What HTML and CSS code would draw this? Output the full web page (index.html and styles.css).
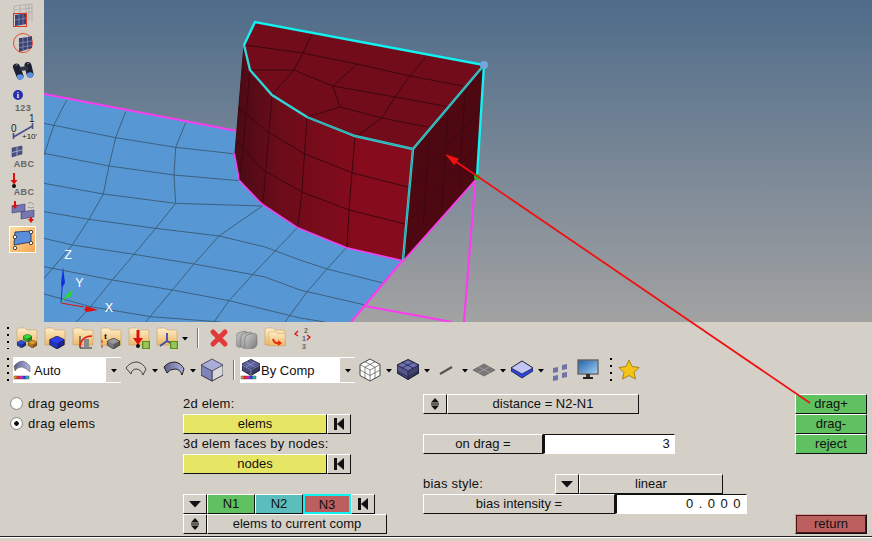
FILE: index.html
```html
<!DOCTYPE html>
<html lang="en">
<head>
<meta charset="utf-8">
<title>Solid edit drag</title>
<link rel="stylesheet" href="styles.css">
</head>
<body>
<svg class="defs" width="0" height="0" aria-hidden="true">
  <defs>
    <linearGradient id="sky" x1="0" y1="0" x2="0" y2="1"><stop offset="0" stop-color="#4f6c8a"/><stop offset="1" stop-color="#a2a2a2"/></linearGradient>
    <linearGradient id="front" x1="235" y1="0" x2="360" y2="0" gradientUnits="userSpaceOnUse"><stop offset="0" stop-color="#4a0a14"/><stop offset=".35" stop-color="#6b0c19"/><stop offset="1" stop-color="#860b1c"/></linearGradient>
    <linearGradient id="fold" x1="0" y1="0" x2="0" y2="1"><stop offset="0" stop-color="#fdeec9"/><stop offset="1" stop-color="#eeb765"/></linearGradient>
    <linearGradient id="rainbow" x1="0" y1="0" x2="1" y2="0"><stop offset="0" stop-color="#e8c020"/><stop offset=".25" stop-color="#e02020"/><stop offset=".5" stop-color="#d020d0"/><stop offset=".7" stop-color="#2030e0"/><stop offset=".85" stop-color="#20c0d0"/><stop offset="1" stop-color="#30c030"/></linearGradient>
    <linearGradient id="orange" x1="0" y1="0" x2="1" y2="1"><stop offset="0" stop-color="#fde0a8"/><stop offset="1" stop-color="#f5a650"/></linearGradient>
    <linearGradient id="screen" x1="0" y1="0" x2="1" y2="1"><stop offset="0" stop-color="#1c5fa8"/><stop offset="1" stop-color="#a5d2f2"/></linearGradient>
    <linearGradient id="shape" x1="0" y1="0" x2="1" y2="0"><stop offset="0" stop-color="#5a5e8a"/><stop offset="1" stop-color="#b0b4dc"/></linearGradient>
    <linearGradient id="shell" x1="0" y1="0" x2="1" y2="1"><stop offset="0" stop-color="#c8c8c8"/><stop offset="1" stop-color="#7c7c7c"/></linearGradient>
    <symbol id="folder" viewBox="0 0 22 22"><path d="M1 3q0-2 2-2h6l2 2h8q2 0 2 2v13H1z" fill="url(#fold)" stroke="#c9a060" stroke-width=".6"/></symbol>
    <symbol id="cube" viewBox="0 0 10 9"><polygon points="5,0 10,2.5 10,6 5,9 0,6 0,2.5" fill="currentColor" stroke="#223" stroke-width=".5"/><polygon points="0,2.5 5,5 5,9 0,6" fill="#000" opacity=".22"/><polygon points="10,2.5 5,5 5,9 10,6" fill="#000" opacity=".4"/></symbol>
    <symbol id="list" viewBox="0 0 8 8"><rect width="8" height="8" fill="#6aa820" stroke="#3c6a10" stroke-width=".6"/><path d="M1.5 2h5M1.5 4h5M1.5 6h5" stroke="#dfeebb" stroke-width=".8"/></symbol>
    <symbol id="caret" viewBox="0 0 8 5"><polygon points="1,1 7,1 4,4.5" fill="#000"/></symbol>
    <symbol id="updown" viewBox="0 0 10 14"><polygon points="5,1 9,5.5 1,5.5" fill="#111"/><rect x="1" y="6.4" width="8" height="1.2" fill="#111"/><polygon points="5,13 9,8.5 1,8.5" fill="#111"/></symbol>
    <symbol id="first" viewBox="0 0 14 14"><rect x="2" y="1" width="3" height="12" fill="#111"/><polygon points="12,1 12,13 5,7" fill="#111"/></symbol>
    <symbol id="bigcaret" viewBox="0 0 14 8"><polygon points="1,1 13,1 7,7.5" fill="#111"/></symbol>
  </defs>
</svg>

<main class="stage">
  <nav class="leftbar">
    <svg class="tool t1" viewBox="0 0 44 28"><path d="M14 6l18-2v18M14 6v10M20 5.500v11M26 5v12M14 10l18-2M14 14l18-2M29 4.500v16" fill="none" stroke="#a5a5a5" stroke-width=".7"/><path d="M15 15l12-2v11l-12 2z" fill="#3d4370"/><path d="M19 14.500v11M23 14v11M15 20l12-2" stroke="#8a90b8" stroke-width=".7"/><rect x="13.500" y="13.500" width="13" height="13" fill="none" stroke="#e6341e" stroke-width="1"/></svg>
    <svg class="tool t2" viewBox="0 28 44 29"><circle cx="23" cy="43" r="9.500" fill="none" stroke="#e8492e" stroke-width="1"/><path d="M19 38q4 0 13-2v12q-7 2-13 4z" fill="#3d4370"/><path d="M23 37.500v13M27.500 37v12M19 43l13-2M19 47.500l13-2" stroke="#8a90b8" stroke-width=".7"/></svg>
    <svg class="tool t3" viewBox="0 57 44 26"><path d="M16.500 67L20 76M28 65.500L30 74" stroke="#1c1f30" stroke-width="7" stroke-linecap="round" fill="none"/><path d="M20 69l8-1" stroke="#30344a" stroke-width="4"/><path d="M15.500 65.500l2-1M27 64l2-.5" stroke="#8a8fa8" stroke-width="1"/><ellipse cx="20" cy="77" rx="3.200" ry="2.700" fill="#5a92e8"/><ellipse cx="30" cy="75" rx="3.200" ry="2.700" fill="#5a92e8"/></svg>
    <svg class="tool t4" viewBox="0 83 44 30"><circle cx="18" cy="95" r="5" fill="#2430b0"/><text x="18" y="98" class="ii">i</text><text x="23" y="111" class="lab">123</text></svg>
    <svg class="tool t5" viewBox="0 113 44 30"><path d="M13.500 133v6M32.500 123v6M13.500 137l19-11" fill="none" stroke="#4b4f86" stroke-width="1.600"/><text x="14" y="132" class="sm">0</text><text x="32" y="122" class="sm">1</text><text x="22" y="139" class="sm2">+10'</text></svg>
    <svg class="tool t6" viewBox="0 143 44 27"><path d="M12 148l10-2v8l-10 3z" fill="#4d5286" stroke="#2c2f58" stroke-width=".5"/><path d="M17 147v9M12 152.500l10-2.500" stroke="#c2c5e0" stroke-width=".7"/><text x="24" y="167" class="lab">ABC</text></svg>
    <svg class="tool t7" viewBox="0 170 44 28"><path d="M14 173v9" stroke="#e01010" stroke-width="2"/><polygon points="10.500,180 17.500,180 14,184.500" fill="#e01010"/><circle cx="14" cy="186" r="2" fill="#111"/><text x="24" y="195" class="lab">ABC</text></svg>
    <svg class="tool t8" viewBox="0 198 44 28"><path d="M12 206l13-2v7l-13 2z" fill="#7376b0" stroke="#2c2f58" stroke-width=".5"/><path d="M21 212l13-2v7l-13 2z" fill="#7376b0" stroke="#2c2f58" stroke-width=".5"/><path d="M15 201v5M31 217v3" stroke="#e01010" stroke-width="2"/><polygon points="12,205 18,205 15,209" fill="#e01010"/><polygon points="28,219 34,219 31,223" fill="#e01010"/><path d="M28 203q4-2 6 2M28 207q3 2 6 0" fill="none" stroke="#999" stroke-width="1"/></svg>
    <svg class="tool t9" viewBox="0 226 44 28"><rect x="9.500" y="226.500" width="26" height="26" fill="url(#orange)" stroke="#fff"/><path d="M15 232l16-1 0 11-17 3z" fill="#5b8ed8" stroke="#1f2b50" stroke-width=".8"/><g fill="#fff" stroke="#222" stroke-width=".8"><circle cx="15" cy="237" r="1.700"/><circle cx="31" cy="232" r="1.700"/><circle cx="31" cy="243" r="1.700"/><circle cx="15" cy="248" r="1.700"/></g></svg>
  </nav>

  <svg class="viewport" viewBox="44 0 828 322">
    <rect x="44" y="0" width="828" height="322" fill="url(#sky)"/>
    <polygon points="44,94 237,131 235,153 403,260 351,322 44,322" fill="#5798d4"/>
    <g transform="translate(44 90) scale(.33333)" fill="none" stroke="#3e5f7e" stroke-width="3">
      <path d="M0 100L215 143L395 172L575 192"/>
      <path d="M0 190L195 228L390 255L585 272"/>
      <path d="M0 280L178 312L395 340L655 348"/>
      <path d="M0 365L135 388L335 415L525 438L660 470L768 510L849 537L1017 579"/>
      <path d="M0 445L85 465L270 493L450 522L660 560L768 600L963 645"/>
      <path d="M0 530L205 570L385 600L555 632L768 684L843 696"/>
      <path d="M0 612L140 650L320 680L530 696"/>
      <path d="M68 30L30 105L0 195"/>
      <path d="M245 65L215 143L195 228L178 312L135 388L85 465L0 565"/>
      <path d="M425 98L395 172L390 255L395 340L335 415L270 493L205 570L140 650L97 696"/>
      <path d="M655 348L525 438L450 522L385 600L305 696"/>
      <path d="M762 411L639 540L555 632L510 696"/>
      <path d="M909 471L849 537L789 606L723 696"/>
    </g>
    <g fill="none" stroke="#fb3cf0">
      <path d="M44 94L237 131" stroke-width="1.800"/>
      <path d="M403 260L351 322" stroke-width="2.200"/>
      <path d="M365 306L452 322" stroke-width="2.200"/>
      <path d="M475 183L464 322" stroke-width="2.200"/>
      <path d="M403 261L477 178" stroke-width="2.200"/>
      <path d="M235 153L240 180L262 203L298 227L347 247L403 260" stroke-width="3"/>
    </g>
    <polygon points="255,22 484,65 413,149 355,136 307,117 272,95 250,70 244,45" fill="#730c1a"/>
    <polygon points="244,45 250,70 272,95 307,117 355,136 413,149 403,260 347,247 298,227 262,203 240,180 235,153" fill="url(#front)"/>
    <polygon points="484,65 413,149 403,260 477,177" fill="#4e0812"/>
    <g fill="none" stroke="#3d0710" stroke-width="1">
      <path d="M312 34L303 53L294 70L272 95"/>
      <path d="M245 45L303 53L357 64L410 76L463 86"/>
      <path d="M250 70L294 70L333 86L395 97L450 107"/>
      <path d="M357 64L333 86L340 107L307 117"/>
      <path d="M426 57L410 76L395 97L382 118L357 136"/>
      <path d="M340 107L382 118L428 127"/>
      <path d="M244 45L235 153"/>
      <path d="M250 70L240 180"/>
      <path d="M272 95L263 203"/>
      <path d="M307 117L302 190L298 227"/>
      <path d="M355 136L352 173L349 210L347 247"/>
      <path d="M238 107L268 132L305 154L353 173L408 187"/>
      <path d="M236 140L263 170L302 192L349 210L405 224"/>
      <path d="M429 138L423 227M448 113L442 207M465 92L459 187"/>
      <path d="M410 187L480 110M406 224L477 147"/>
    </g>
    <path d="M244 45L250 70L272 95L307 117L355 136L413 149L403 260M484 65L413 149" fill="none" stroke="#33d6d6" stroke-width="2.400"/>
    <path d="M307 117L355 136L413 149L403 260M484 65L413 149" fill="none" stroke="#2b7f8c" stroke-width=".6"/>
    <path d="M244 45L255 22L484 65L477 177" fill="none" stroke="#12f2f2" stroke-width="2.400"/>
    <circle cx="484" cy="65" r="4" fill="#6ea8dc"/>
    <circle cx="477" cy="177" r="3" fill="#1fb81f"/>
    <path d="M61 303L63 275" stroke="#1030e0" stroke-width="1"/>
    <path d="M63 267L65 283L62 288L61 283z" fill="#1030e0"/>
    <path d="M61 303L68 294" stroke="#20e020" stroke-width="1"/>
    <path d="M73 290L70 297L66 298L67 294z" fill="#20e020"/>
    <path d="M61 303L84 307" stroke="#e01010" stroke-width="1"/>
    <path d="M98 310L87 312L84 310L86 306z" fill="#e01010"/>
    <text x="68" y="259" class="axis">Z</text>
    <text x="79.500" y="287" class="axis">Y</text>
    <text x="109" y="312" class="axis">X</text>
  </svg>
</main>

<section class="bar bar-one">
  <span class="grip"></span>
  <svg class="ic"><use href="#folder"/><use href="#cube" x="7" y="7" width="9" height="8" color="#35e035"/><use href="#cube" x="1" y="13" width="9" height="8" color="#2c4ee0"/><use href="#cube" x="12" y="13" width="9" height="8" color="#e09a28"/></svg>
  <svg class="ic"><use href="#folder"/><use href="#cube" x="4" y="9" width="18" height="13" color="#2c40f0"/></svg>
  <svg class="ic"><use href="#folder"/><path d="M8 9v12h12" fill="none" stroke="#222"/><path d="M8 20q1-11 12-11" fill="none" stroke="#e02020" stroke-width="1.600"/><rect x="12" y="12" width="5" height="9" fill="#888"/></svg>
  <svg class="ic"><use href="#folder"/><text x="4" y="12" class="t-t">t</text><path d="M2 13v3M2 18v3" stroke="#d02020"/><use href="#cube" x="5" y="11" width="17" height="11" color="#9a9a9a"/></svg>
  <svg class="ic"><use href="#folder"/><path d="M10 3v11" stroke="#e01010" stroke-width="3"/><polygon points="5,11 15,11 10,18" fill="#e01010"/><circle cx="10" cy="19" r="2" fill="#111"/><use href="#list" x="14" y="14" width="8" height="8"/></svg>
  <svg class="ic"><use href="#folder"/><path d="M11 14v-8M11 14l-7 5M11 14l7 4" stroke="#3a4aa8" stroke-width="1.800" fill="none"/><use href="#list" x="14" y="14" width="8" height="8"/></svg>
  <svg class="caret caret-one"><use href="#caret"/></svg>
  <span class="sep sep-one"></span>
  <svg class="ic ic-x"><path d="M5 5l12 12M17 5L5 17" stroke="#e23a3a" stroke-width="5" stroke-linecap="round"/></svg>
  <svg class="ic"><rect x="0" y="3" width="12" height="15" rx="4" fill="url(#shell)" stroke="#777" stroke-width=".6" transform="skewY(-12) translate(0 3)"/><rect x="5" y="5" width="12" height="15" rx="4" fill="url(#shell)" stroke="#777" stroke-width=".6" transform="skewY(-12) translate(0 3)"/><rect x="9" y="7" width="12" height="15" rx="4" fill="url(#shell)" stroke="#777" stroke-width=".6" transform="skewY(-12) translate(0 3)"/></svg>
  <svg class="ic"><use href="#folder"/><use href="#folder" x="4" y="4" width="18" height="18"/><path d="M9 12q1 5 7 4" fill="none" stroke="#e03010" stroke-width="2"/><polygon points="14,13 18,16 14,19" fill="#e03010"/></svg>
  <svg class="ic ic-num"><text x="12" y="6" class="num">2</text><text x="10" y="14" class="num">1</text><text x="10" y="22" class="num">3</text><path d="M6 4l-3 3 3 2M15 8l3 2-3 3" stroke="#e01010" stroke-width="1.300" fill="none"/></svg>
</section>

<section class="bar bar-two">
  <span class="grip"></span>
  <div class="combo combo-auto">
    <svg class="combo-icon"><path d="M1 7q4-5 9-5q4 1 7 5l0 6q-4-4-8-5q-5 0-7 4z" fill="url(#shape)" stroke="#555" stroke-width=".5"/><rect x="1" y="17" width="15" height="3" fill="url(#rainbow)" stroke="#555" stroke-width=".5"/></svg>
    <span class="combo-text">Auto</span>
    <span class="combo-btn"><svg class="caret"><use href="#caret"/></svg></span>
  </div>
  <svg class="ic"><path d="M1 10q4-6 11-6q6 1 9 7l-3 6q-2-6-7-6q-4 0-5 5z" fill="none" stroke="#444"/></svg>
  <svg class="caret"><use href="#caret"/></svg>
  <svg class="ic"><path d="M1 9q4-5 11-5q6 1 9 7l-2 6q-2-6-7-6q-5 0-8 4z" fill="url(#shape)" stroke="#222"/></svg>
  <svg class="caret"><use href="#caret"/></svg>
  <svg class="ic"><polygon points="11,1 22,7 22,17 11,23 0,17 0,7" fill="#a9add8" stroke="#334" stroke-width=".8"/><polygon points="11,13 22,7 22,17 11,23" fill="#d8d8d8" stroke="#334" stroke-width=".8"/><polygon points="0,7 11,13 11,23 0,17" fill="#7f84b8" stroke="#334" stroke-width=".8"/></svg>
  <span class="sep sep-two"></span>
  <div class="combo combo-comp">
    <svg class="combo-icon"><use href="#cube" x="2" y="0" width="18" height="17" color="#5b5f9c"/><path d="M2 6l9 5 9-5M11 11v6M6 3l9 5M15 3l-9 5" stroke="#a0a4d0" stroke-width=".6" fill="none"/><rect x="1" y="17" width="15" height="3" fill="url(#rainbow)" stroke="#555" stroke-width=".5"/></svg>
    <span class="combo-text">By Comp</span>
    <span class="combo-btn"><svg class="caret"><use href="#caret"/></svg></span>
  </div>
  <svg class="ic"><polygon points="11,1 21,6.500 21,17.500 11,23 1,17.500 1,6.500" fill="#fff" stroke="#444"/><path d="M1 6.500l10 5.500 10-5.500M11 12v11M6 3.700l10 5.500M16 3.700L6 9.200M1 12l10 5.500 10-5.500M6 9.200v11M16 9.200v11" stroke="#555" stroke-width=".7" fill="none"/></svg>
  <svg class="caret"><use href="#caret"/></svg>
  <svg class="ic"><use href="#cube" x="0" y="1" width="22" height="21" color="#6d70ac"/><path d="M0 7l11 6 11-6M11 13v9M5 4l11 6M17 4L5 10M0 13l11 6 11-6" stroke="#1e2050" stroke-width=".8" fill="none"/></svg>
  <svg class="caret"><use href="#caret"/></svg>
  <svg class="ic"><path d="M5 16L17 9" stroke="#555" stroke-width="2.200"/></svg>
  <svg class="caret"><use href="#caret"/></svg>
  <svg class="ic"><polygon points="11,6 22,12 11,18 0,12" fill="#777" stroke="#555" stroke-width=".6"/><path d="M6 9l11 6M16 9L5 15" stroke="#aaa" stroke-width=".7"/></svg>
  <svg class="caret"><use href="#caret"/></svg>
  <svg class="ic"><polygon points="11,3 22,10 22,13 11,20 0,13 0,10" fill="#2c44e8" stroke="#111" stroke-width=".7"/><polygon points="11,3 22,10 11,16 0,10" fill="#c3c6f4" stroke="#111" stroke-width=".7"/></svg>
  <svg class="caret"><use href="#caret"/></svg>
  <svg class="ic"><g fill="#6f73a8"><path d="M4 10l5-1v5l-5 1zM13 7l5-1v5l-5 1zM4 18l5-1v5l-5 1zM13 15l5-1v5l-5 1z"/></g></svg>
  <svg class="ic ic-mon"><rect x="1" y="2" width="20" height="14" fill="url(#screen)" stroke="#666" stroke-width="1.400"/><rect x="9" y="16" width="4" height="3" fill="#333"/><rect x="6" y="19" width="10" height="2" fill="#222"/></svg>
  <span class="grip grip-mid"></span>
  <svg class="ic ic-star"><polygon points="11,2 14,8.500 21,9.500 16,14.500 17.500,21 11,17.500 4.500,21 6,14.500 1,9.500 8,8.500" fill="#f4c416" stroke="#a88410"/></svg>
</section>

<section class="panel">
  <div class="col col-radio">
    <label class="radio"><span class="dot"></span>drag geoms</label>
    <label class="radio"><span class="dot dot-on"></span>drag elems</label>
  </div>
  <div class="col col-sel">
    <div class="text">2d elem:</div>
    <div class="row"><button class="btn yellow w-sel">elems</button><button class="btn ico w-ico"><svg class="glyph"><use href="#first"/></svg></button></div>
    <div class="text">3d elem faces by nodes:</div>
    <div class="row"><button class="btn yellow w-sel">nodes</button><button class="btn ico w-ico"><svg class="glyph"><use href="#first"/></svg></button></div>
    <div></div>
    <div class="row"><button class="btn ico w-ico"><svg class="glyph-c"><use href="#bigcaret"/></svg></button><button class="btn green w-n">N1</button><button class="btn teal w-n">N2</button><button class="btn red w-n active">N3</button><button class="btn ico w-ico"><svg class="glyph"><use href="#first"/></svg></button></div>
    <div class="row"><button class="btn ico w-ico"><svg class="glyph"><use href="#updown"/></svg></button><button class="btn w-comp">elems to current comp</button></div>
  </div>
  <div class="col col-opts">
    <div class="row"><button class="btn ico w-ico"><svg class="glyph"><use href="#updown"/></svg></button><button class="btn w-dist">distance = N2-N1</button></div>
    <div></div>
    <div class="row"><button class="btn w-drag">on drag =</button><span class="field w-dragf">3</span></div>
    <div></div>
    <div class="row"><span class="text w-lab">bias style:</span><button class="btn ico w-ico"><svg class="glyph-c"><use href="#bigcaret"/></svg></button><button class="btn w-lin">linear</button></div>
    <div class="row"><button class="btn w-int">bias intensity =</button><span class="field w-intf spaced">0.000</span></div>
  </div>
  <div class="col col-act">
    <button class="btn green">drag+</button>
    <button class="btn green">drag-</button>
    <button class="btn green">reject</button>
    <div></div><div></div><div></div>
    <button class="btn return">return</button>
  </div>
</section>
<div class="rule"></div>

<svg class="overlay" viewBox="0 0 872 541">
  <path d="M810 403L455 161" stroke="#f01010" stroke-width="1.800"/>
  <polygon points="445,154 458.900,158.700 454.300,165.300" fill="#f01010"/>
</svg>
</body>
</html>
```
FILE: styles.css
```css
* { box-sizing: border-box; }
html, body { margin: 0; padding: 0; }
body {
  position: relative;
  width: 872px;
  height: 541px;
  overflow: hidden;
  background: #d4d0c8;
  color: #111;
  font: 13px "Liberation Sans", Arial, sans-serif;
  letter-spacing: .2px;
}
.defs { position: absolute; }
.stage { display: flex; height: 322px; }
.leftbar { width: 44px; display: flex; flex-direction: column; flex: none; }
.tool { display: block; width: 44px; flex: none; }
.t1 { height: 28px; } .t2 { height: 29px; } .t3 { height: 26px; } .t4 { height: 30px; }
.t5 { height: 30px; } .t6 { height: 27px; } .t7 { height: 28px; } .t8 { height: 28px; } .t9 { height: 28px; }
.viewport { display: block; width: 828px; height: 322px; flex: none; }
.ii { font: bold 8px "Liberation Serif", serif; fill: #fff; text-anchor: middle; }
.lab { font: bold 9px "Liberation Sans", sans-serif; fill: #666; text-anchor: middle; letter-spacing: .3px; }
.sm { font: 10px "Liberation Sans", sans-serif; fill: #222; text-anchor: middle; }
.sm2 { font: 8px "Liberation Sans", sans-serif; fill: #222; letter-spacing: 0; }
.axis { font: 12.500px "Liberation Sans", sans-serif; fill: #fff; text-anchor: middle; letter-spacing: 0; }
.t-t { font: bold 9px "Liberation Serif", serif; fill: #111; }
.num { font: bold 7px "Liberation Sans", sans-serif; fill: #666; letter-spacing: 0; }

.bar { display: flex; padding-left: 7px; }
.bar-one { height: 31px; padding-top: 5px; gap: 6px; align-items: flex-start; }
.bar-two { height: 37px; padding-top: 4px; gap: 4px; align-items: center; padding-bottom: 7px; }
.grip {
  width: 2px;
  flex: none;
  background: repeating-linear-gradient(#000 0 2px, transparent 2px 7px);
}
.bar-one .grip { height: 22px; margin-right: 1px; }
.bar-two .grip { height: 24px; }
.bar-two .grip-mid { margin-left: 7px; }
.ic { width: 22px; height: 24px; flex: none; display: block; }
.bar-one .ic { height: 22px; }
.bar-one .ic-num { height: 25px; }
.caret { width: 8px; height: 5px; flex: none; display: block; }
.caret-one { margin: 9px 0 0 -3px; }
.sep { width: 1px; flex: none; background: #777; box-shadow: 1px 0 0 #fff; }
.sep-one { height: 20px; margin: 1px 0 0 2px; }
.sep-two { height: 20px; margin: 0 2px 0 6px; }
.ic-x { margin-left: 4px; }
.ic-mon { margin-left: 2px; }
.ic-star { margin-left: 2px; }
.combo {
  height: 26px;
  flex: none;
  display: flex;
  align-items: center;
  background: #fff;
  letter-spacing: 0;
}
.combo-auto { width: 108px; }
.combo-comp { width: 115px; }
.combo-icon { width: 21px; height: 22px; flex: none; }
.combo-text { flex: 1; font-size: 13px; color: #111; }
.combo-btn {
  width: 15px;
  height: 24px;
  flex: none;
  background: #d4d0c8;
  display: flex;
  align-items: center;
  justify-content: center;
}

.panel { display: flex; height: 140px; padding: 0 0 0 10px; margin-top: 4px; }
.col { display: grid; grid-auto-rows: 20px; flex: none; }
.col-radio { width: 173px; letter-spacing: .3px; }
.col-sel { width: 240px; }
.col-opts { width: 372px; }
.col-act { width: 72px; }
.row { display: flex; height: 20px; }
.text { line-height: 19px; white-space: nowrap; }
.radio { display: flex; align-items: center; gap: 5px; height: 19px; }
.dot {
  width: 13px;
  height: 13px;
  border-radius: 50%;
  background: #fff;
  border: 1px solid #8a8a8a;
  flex: none;
  box-shadow: inset 0 0 0 1px #f4f4f4;
}
.dot-on { background: radial-gradient(circle, #111 0 2px, #fff 2.500px); }
.btn {
  height: 20px;
  margin: 0;
  padding: 0 0 2px;
  font: inherit;
  letter-spacing: 0;
  color: #111;
  background: #d4d0c8;
  border: 1px solid;
  border-color: #fff #111 #111 #fff;
  display: flex;
  align-items: center;
  justify-content: center;
  flex: none;
  white-space: nowrap;
}
.ico { padding: 0; }
.glyph { width: 14px; height: 14px; display: block; }
.glyph-c { width: 14px; height: 8px; display: block; }
.yellow { background: #e6e664; }
.green { background: #5fc160; }
.teal { background: #5cbdbd; }
.red { background: #bd5f5f; }
.active { border: 2px solid #12f2f2; padding-bottom: 0; }
.return {
  background: #bd5f5f;
  border-color: #d4a0a0 #111 #111 #d4a0a0;
  box-shadow: inset 0 0 0 1px #4a1616;
}
.w-sel { width: 144px; }
.w-ico { width: 24px; }
.w-n { width: 48px; }
.w-comp { width: 180px; }
.w-dist { width: 192px; }
.w-drag { width: 120px; }
.w-dragf { width: 132px; }
.w-lab { width: 132px; }
.w-lin { width: 144px; }
.w-int { width: 192px; }
.w-intf { width: 132px; }
.field {
  height: 20px;
  background: #fff;
  border: 1px solid;
  border-color: #111 #fff #fff #111;
  border-left-width: 2px;
  display: flex;
  align-items: center;
  justify-content: flex-end;
  padding: 0 4px 2px 0;
  flex: none;
}
.spaced { letter-spacing: 5.500px; padding-right: 0; }
.rule { height: 2px; margin-top: 2px; background: linear-gradient(#222 1px, #fff 1px); }
.overlay { position: absolute; left: 0; top: 0; width: 872px; height: 541px; pointer-events: none; }
```
